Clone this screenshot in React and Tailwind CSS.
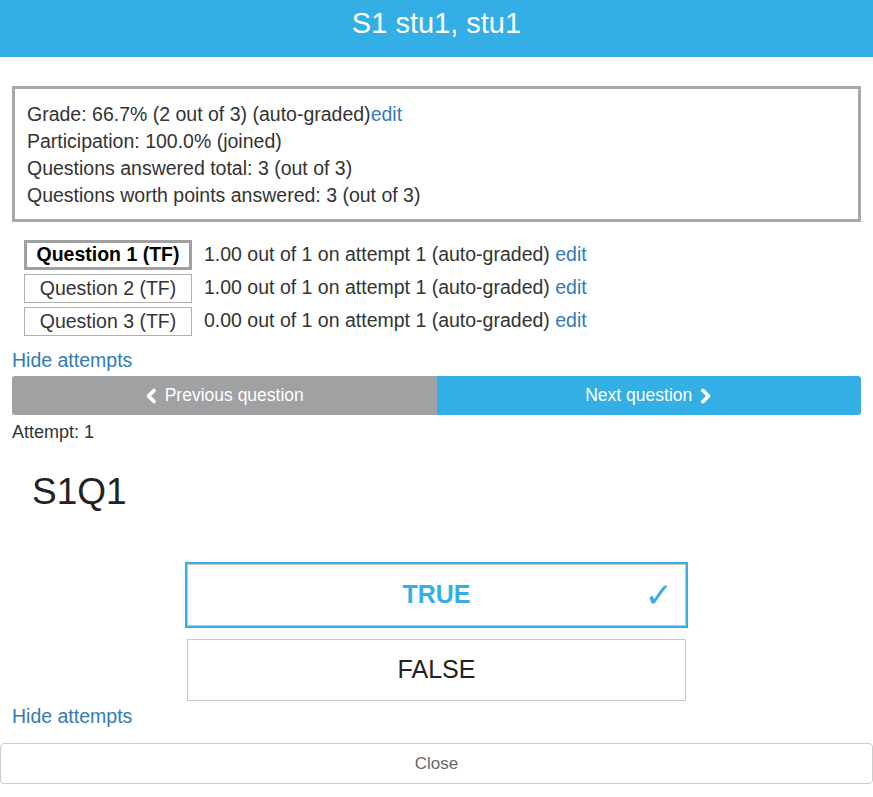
import React from "react";

const rows = [
  { label: "Question 1 (TF)", score: "1.00", active: true },
  { label: "Question 2 (TF)", score: "1.00", active: false },
  { label: "Question 3 (TF)", score: "0.00", active: false },
];

const Chevron = ({ dir }) => (
  <svg width="12" height="16" viewBox="0 0 12 16" className="shrink-0">
    <polyline
      points={dir === "left" ? "9,2.5 3.5,8 9,13.5" : "3,2.5 8.5,8 3,13.5"}
      fill="none"
      stroke="white"
      strokeWidth="3.8"
      strokeLinecap="round"
      strokeLinejoin="round"
    />
  </svg>
);

const App = () => {
  return (
    <div className="min-h-screen bg-white text-[#333] font-['Liberation_Sans',Arial,sans-serif]">
      {/* ── Header ─────────────────────────────────────────── */}
      <div className="h-[57px] bg-[#33afe6] text-white text-[29px] flex items-center justify-center pb-[10px]">
        S1 stu1, stu1
      </div>

      <div className="px-3 pt-[29px]">
        {/* Summary box */}
        <div className="border-[3px] border-[#a8a8a8] pl-3 pt-3 pb-[10px] text-[19.5px] leading-[27px]">
          <div>
            Grade: 66.7% (2 out of 3) (auto-graded)
            <a className="text-[#337ab7]">edit</a>
          </div>
          <div>Participation: 100.0% (joined)</div>
          <div>Questions answered total: 3 (out of 3)</div>
          <div>Questions worth points answered: 3 (out of 3)</div>
        </div>

        {/* Question list */}
        <div className="mt-[18px] pl-3 flex flex-col gap-[4px] text-[19.5px]">
          {rows.map((r) => (
            <div key={r.label} className="flex items-center gap-3">
              <div
                className={
                  r.active
                    ? "w-[168px] h-[30px] border-[3px] border-[#a0a0a0] flex items-center justify-center font-bold text-black"
                    : "w-[168px] h-[29px] border border-[#b0b0b0] flex items-center justify-center"
                }
              >
                {r.label}
              </div>
              <div className="leading-[24px] -mt-[3px]">
                {r.score} out of 1 on attempt 1 (auto-graded){" "}
                <a className="text-[#337ab7]">edit</a>
              </div>
            </div>
          ))}
        </div>

        <div className="mt-[12px] text-[19.5px] leading-[24px] text-[#337ab7]">Hide attempts</div>

        {/* Prev / next */}
        <div className="mt-[4px] h-[39px] flex rounded-[3px] overflow-hidden text-white text-[17.5px]">
          <div className="flex-1 bg-[#a0a1a3] flex items-center justify-center gap-[8px]">
            <Chevron dir="left" />
            <span>Previous question</span>
          </div>
          <div className="flex-1 bg-[#33afe6] flex items-center justify-center gap-[8px]">
            <span>Next question</span>
            <Chevron dir="right" />
          </div>
        </div>

        <div className="mt-[7px] text-[18px] leading-[20px]">Attempt: 1</div>

        <div className="mt-[28px] pl-5 text-[37px] leading-[44px] text-[#222]">S1Q1</div>

        {/* Answers */}
        <div className="mt-[50px] flex flex-col items-center gap-[13px]">
          <div className="relative w-[499px] h-[62px] border border-[#c8c8c8] outline-2 outline-[#33afe6] flex items-center justify-center">
            <span className="text-[25px] font-bold text-[#33afe6]">TRUE</span>
            <span className="absolute right-[12px] top-[12px] text-[34px] leading-[36px] text-[#33afe6] font-['DejaVu_Sans',sans-serif]">
              ✓
            </span>
          </div>
          <div className="w-[499px] h-[62px] border border-[#c8c8c8] flex items-center justify-center">
            <span className="text-[25px] text-[#222]">FALSE</span>
          </div>
        </div>

        <div className="mt-[3px] text-[19.5px] leading-[24px] text-[#337ab7]">Hide attempts</div>
      </div>

      <div className="mt-[15px] h-[41px] border border-[#cccccc] rounded-[4px] flex items-center justify-center text-[17px] text-[#666]">
        Close
      </div>
    </div>
  );
};

export default App;
